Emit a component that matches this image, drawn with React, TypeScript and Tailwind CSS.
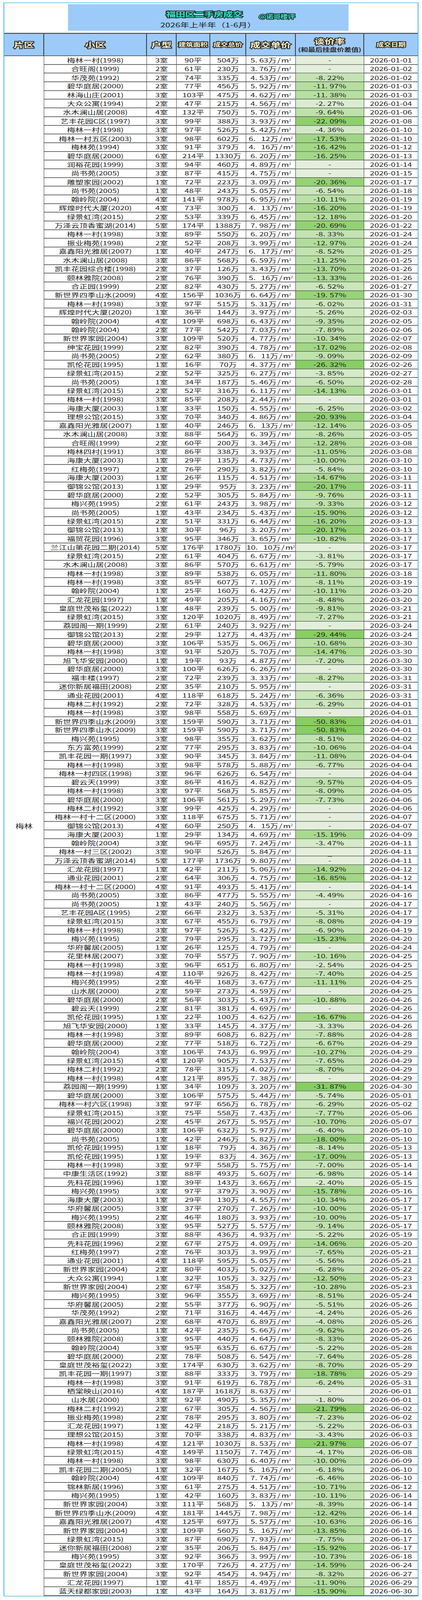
const DATA = `梅林一村(1998)|3|90|504|5.63|-|01-01
合旺阁(1999)|2|61|230|3.76|-|01-02
华茂苑(1992)|2|74|335|4.53|-8.22|01-02
碧华庭居(2000)|2|77|456|5.92|-11.97|01-03
林海山庄(2001)|3|103|475|4.62|-11.38|01-03
大众公寓(1994)|2|47|215|4.56|-2.27|01-04
水木澜山居(2008)|4|132|750|5.70|-9.64|01-06
艺丰花园C区(1997)|3|99|388|3.93|-22.09|01-08
梅林一村(1998)|3|97|526|5.42|-4.36|01-10
梅林一村五区(2003)|3|98|602|6. 12|-17.53|01-10
梅林苑(1994)|3|91|379|4. 16|-16.42|01-12
碧华庭居(2000)|6|214|1330|6.20|-16.25|01-13
润裕花园(1999)|3|94|460|4.89|-|01-14
尚书苑(2005)|3|87|415|4.75|-|01-15
雕塑家园(2002)|1|72|223|3.09|-20.36|01-17
尚书苑(2005)|1|48|243|5.05|-6.54|01-18
翰岭院(2004)|4|141|978|6.95|-10.11|01-19
辉煌时代大厦(2020)|4|73|300|4. 13|-16.20|01-19
绿景虹湾(2015)|2|53|339|6.45|-12.18|01-20
万泽云顶香蜜湖(2014)|5|174|1388|7.98|-20.69|01-22
梅林一村(1998)|3|89|550|6.20|-8.33|01-24
振业梅苑(1998)|2|52|208|3.99|-12.97|01-24
嘉鑫阳光雅居(2007)|1|40|247|6. 17|-8.52|01-25
水木澜山居(2008)|3|86|568|6.59|-11.25|01-25
凯丰花园综合楼(1998)|2|37|126|3.43|-13.70|01-26
颐林雅院(2008)|2|76|390|5. 16|-13.33|01-26
合正园(1999)|2|82|430|5.27|-6.52|01-27
新世界四季山水(2009)|4|156|1036|6.64|-19.57|01-30
梅林一村(1998)|3|97|515|5.31|-6.02|01-31
辉煌时代大厦(2020)|1|36|144|3.97|-5.26|02-03
翰岭院(2004)|4|109|698|6.43|-9.35|02-05
翰岭院(2004)|2|77|542|7.03|-7.89|02-06
新世界家园(2004)|3|109|520|4.77|-10.34|02-07
绅宝花园(1999)|2|82|390|4.78|-17.02|02-08
尚书苑(2005)|2|62|380|6. 11|-9.09|02-09
凯伦花园(1995)|1|16|70|4.37|-26.32|02-26
绿景虹湾(2015)|2|52|325|6.27|-3.85|02-27
尚书苑(2005)|1|34|187|5.46|-6.50|02-28
绿景虹湾(2015)|2|52|316|6.11|-14.13|03-01
梅林一村(1998)|3|85|208|2.44|-|03-01
海康大厦(2003)|1|33|150|4.55|-6.25|03-02
理想公馆(2015)|3|70|340|4.86|-20.93|03-04
嘉鑫阳光雅居(2007)|1|40|246|6. 13|-12.14|03-05
水木澜山居(2008)|3|88|564|6.39|-8.26|03-05
合旺阁(1999)|2|60|200|3.34|-12.28|03-08
梅林四村(1991)|3|86|338|3.93|-11.05|03-08
海康大厦(2003)|1|29|135|4.73|-10.00|03-10
红梅苑(1997)|2|76|290|3.82|-5.84|03-10
海康大厦(2003)|1|26|115|4.51|-14.67|03-11
御锦公馆(2013)|1|29|95|3.23|-20.17|03-11
碧华庭居(2000)|2|52|305|5.84|-9.76|03-11
梅兴苑(1995)|2|61|243|3.98|-9.33|03-12
尚书苑(2005)|1|43|234|5.43|-15.90|03-12
绿景虹湾(2015)|2|51|331|6.44|-16.20|03-13
御锦公馆(2013)|1|30|96|3.20|-20.17|03-13
福贸花园(1996)|3|95|346|3.65|-10.82|03-17
兰江山第花园二期(2014)|5|176|1780|10. 10|-|03-17
绿景虹湾(2015)|2|61|404|6.67|-3.81|03-17
水木澜山居(2008)|3|86|570|6.61|-5.79|03-17
梅林一村(1998)|3|89|538|6.05|-11.80|03-18
梅林一村(1998)|3|85|607|7.10|-8.11|03-19
翰岭院(2004)|1|25|160|6.42|-10.11|03-20
汇龙花园(1997)|1|49|205|4.16|-8.48|03-20
皇庭世茂裕玺(2022)|1|48|239|5.00|-9.81|03-21
绿景虹湾(2015)|3|120|1020|8.49|-7.27|03-21
荔园阁一期(1999)|2|61|240|3.92|-|03-24
御锦公馆(2013)|2|29|127|4.43|-29.44|03-24
碧华庭居(2000)|3|106|535|5.06|-10.68|03-30
梅林一村(1998)|3|91|520|5.70|-14.47|03-30
旭飞华安园(2000)|1|19|93|4.87|-7.20|03-30
碧华庭居(2000)|3|100|626|6.26|-|03-30
福丰楼(1997)|2|72|239|3.33|-8.27|03-31
迷你新居福田(2008)|2|35|210|5.95|-|03-31
通业花园(2001)|4|118|618|5.24|-6.36|03-31
梅林二村(1992)|2|72|328|4.53|-6.29|04-01
梅林一村(1998)|3|98|558|5.69|-|04-01
新世界四季山水(2009)|3|159|590|3.71|-50.83|04-01
新世界四季山水(2009)|3|159|590|3.71|-50.83|04-01
梅兴苑(1995)|3|98|355|3.62|-8.51|04-02
东方富苑(1999)|2|77|295|3.83|-10.06|04-04
凯丰花园一期(1997)|3|90|345|3.84|-11.08|04-04
梅林一村(1998)|3|98|578|5.88|-6.77|04-04
梅林一村四区(1998)|3|96|626|6.54|-|04-04
碧云天(1999)|3|86|416|4.82|-9.57|04-05
梅林一村(1998)|3|97|568|5.85|-8.09|04-05
碧华庭居(2000)|3|106|561|5.29|-7.73|04-06
梅林二村(1992)|3|99|425|4.29|-|04-06
梅林一村十二区(2000)|3|118|675|5.71|-|04-07
御锦公馆(2013)|4|60|250|4. 15|-|04-07
海康大厦(2003)|1|29|134|4.69|-15.19|04-09
翰岭院(2004)|3|96|695|7.24|-3.47|04-11
梅林一村三区(2002)|3|90|526|5.84|_|04-11
万泽云顶香蜜湖(2014)|5|177|1736|9.80|-|04-11
汇龙花园(1997)|1|42|211|5.06|-14.92|04-12
通业花园(2001)|2|64|306|4.75|-16.85|04-12
梅林一村十二区(2000)|4|91|493|5.41|-|04-14
尚书苑(2005)|3|86|477|5.55|-4.49|04-16
尚书苑(2005)|1|43|240|5.56|-|04-17
艺丰花园A区(1995)|2|66|232|3.53|-5.31|04-17
绿景虹湾(2015)|3|67|455|6.79|-8.08|04-19
梅林一村(1998)|3|97|526|5.42|-6.90|04-19
梅兴苑(1995)|2|79|295|3.72|-15.23|04-20
华府馨居(2005)|1|26|125|4.79|-|04-24
花里林居(2007)|3|70|557|7.90|-10.16|04-25
梅林一村(1998)|3|96|651|6.80|-2.54|04-25
梅林一村(1998)|4|110|926|8.42|-7.40|04-25
梅兴苑(1995)|2|46|168|3.67|-11.11|04-25
山水居(2000)|2|59|273|4.59|-|04-25
碧华庭居(2000)|2|56|303|5.43|-10.88|04-26
碧云天(1999)|2|81|381|4.69|-|04-26
凯伦花园(1995)|1|22|100|4.62|-16.67|04-26
旭飞华安园(2000)|1|33|145|4.37|-3.33|04-26
梅林一村(1998)|3|89|608|6.82|-7.88|04-28
碧华庭居(2000)|2|77|518|6.72|-6.67|04-29
翰岭院(2004)|3|106|743|6.99|-10.27|04-29
绿景虹湾(2015)|4|120|905|7.53|-7.65|04-29
梅林二村(1992)|2|78|315|4.02|-8.70|04-29
梅林一村(1998)|4|121|895|7.38|-|04-29
荔园阁一期(1999)|1|34|109|3.20|-31.87|04-30
碧华庭居(2000)|3|106|575|5.44|-5.74|05-01
梅林一村六区(1998)|3|97|656|6.78|-6.29|05-02
绿景虹湾(2015)|3|75|558|7.43|-7.77|05-06
福兴花园(2002)|2|45|267|5.95|-10.70|05-07
碧华庭居(2000)|3|106|632|5.97|-6.40|05-10
尚书苑(2005)|1|42|246|5.82|-18.00|05-10
凯伦花园(1995)|1|18|79|4.36|-8.14|05-13
凯伦花园(1995)|1|19|83|4.36|-17.00|05-13
梅林一村(1998)|3|97|558|5.75|-7.00|05-14
中康生活区(1992)|3|88|493|5.60|-6.98|05-14
先科花园(1996)|1|39|143|3.66|-2.40|05-15
梅兴苑(1995)|3|97|379|3.90|-15.78|05-16
海康大厦(2003)|1|29|130|4.55|-10.34|05-17
华府馨居(2005)|3|37|270|7.26|-10.00|05-17
梅兴苑(1995)|2|46|180|3.93|-10.00|05-17
颐林雅院(2008)|3|95|527|5.57|-9.14|05-17
合正园(1999)|3|88|436|4.93|-5.22|05-19
先科花园(1996)|2|67|275|4.09|-14.06|05-20
红梅苑(1997)|2|76|303|3.99|-7.65|05-21
通业花园(2001)|4|118|595|5.05|-5.56|05-21
新世界家园(2004)|2|80|403|5.02|-6.28|05-22
大众公寓(1994)|1|32|105|3.32|-12.50|05-23
新世界家园(2004)|2|67|358|5.32|-10.28|05-23
梅兴苑(1995)|3|96|355|3.69|-8.51|05-24
华府馨居(2005)|2|55|377|6.90|-5.51|05-26
华茂苑(1992)|2|71|316|4.44|-4.24|05-26
嘉鑫阳光雅居(2007)|2|68|470|6.89|-4.08|05-26
尚书苑(2005)|1|42|235|5.66|-9.62|05-26
颐林雅院(2008)|3|95|440|4.64|-8.33|05-26
翰岭院(2004)|3|95|635|6.67|-5.22|05-28
碧华庭居(2000)|2|78|508|6.54|-7.64|05-28
皇庭世茂裕玺(2022)|3|174|630|3.62|-8.70|05-29
凯丰花园一期(1997)|3|88|333|3.79|-18.78|05-29
梅林一村(1998)|3|91|619|6.78|-6.24|05-31
栖棠映山(2016)|4|187|1618|8.63|-|06-01
山水居(2000)|3|92|490|5.35|-1.80|06-01
梅林二村(1992)|2|67|305|4.56|-21.79|06-02
振业梅苑(1998)|2|78|295|3.80|-7.23|06-02
汇龙花园(1997)|1|42|218|5.21|-5.22|06-03
理想公馆(2015)|3|70|338|4.83|-3.43|06-03
梅林一村(1998)|4|121|1030|8.53|-21.97|06-07
绿景虹湾(2015)|4|149|1150|7.74|-4.17|06-08
梅林一村(1998)|3|98|630|6.40|-10.00|06-09
凯丰花园二期(2005)|1|32|167|5. 16|-6.18|06-10
翰岭院(2004)|4|109|840|7.74|-6.46|06-10
锦林新居(1996)|3|61|275|4.51|-10.71|06-12
梅兴苑(1995)|1|42|160|3.83|-10.11|06-14
新世界家园(2004)|3|111|568|5. 13|-8.39|06-14
新世界四季山水(2009)|4|181|1445|7.98|-12.42|06-14
嘉鑫阳光雅居(2007)|4|125|697|5.57|-10.63|06-16
新世界家园(2004)|3|109|560|5. 16|-13.85|06-16
绿景虹湾(2015)|3|87|690|7.93|-7.75|06-17
迷你新居福田(2008)|2|35|206|5.84|-15.92|06-17
梅兴苑(1995)|3|92|366|3.99|-10.73|06-18
皇庭世茂裕玺(2022)|3|170|726|4.27|-14.59|06-24
新世界家园(2004)|3|92|454|4.94|-8.32|06-27
汇龙花园(1997)|1|41|185|4.49|-11.90|06-29
蓝天绿都家园(2003)|1|43|164|3.81|-15.90|06-30`

const rows = DATA.split("\n").map((line) => line.split("|"))

// excel-style colour scale: pale at 0, saturated green from ~22% down
function rateBg(rate: string) {
  const v = rate.length > 1 ? Math.abs(parseFloat(rate)) : 0
  const t = Math.min(v / 22, 1.08)
  const a = [227, 239, 219]
  const b = [142, 208, 108]
  const c = a.map((x, i) => Math.round(x + (b[i] - x) * t))
  return `rgb(${c[0]}, ${c[1]}, ${c[2]})`
}

const outlined = "font-bold [paint-order:stroke_fill] [-webkit-text-stroke:5px_#262626]"

function Decimal({ value, suffix }: { value: string; suffix: React.ReactNode }) {
  const wide = value.includes(" ")
  const [int, dec] = value.replace(" ", "").split(".")
  return (
    <span className="whitespace-nowrap">
      {int}.<span className={wide ? "ml-[14px]" : "ml-[5px]"}>{dec}</span>
      {suffix}
    </span>
  )
}

function DataRow({ r }: { r: string[] }) {
  const [name, room, area, total, price, rate, date] = r
  return (
    <div className="grid h-[31.7px] grid-cols-[263px_76px_86px_92px_127px_175px_137px] border-b-2 border-[#2e2e2e] text-[21px] leading-none text-[#1e1e1e]">
      <div className="flex items-center justify-center border-r border-[#333] whitespace-nowrap">{name}</div>
      <div className="flex items-center justify-center border-r border-[#333]">{room}室</div>
      <div className="flex items-center justify-center border-r border-[#333]">{area}平</div>
      <div className="flex items-center justify-center border-r border-[#333]">{total}万</div>
      <div className="flex items-center justify-center border-r border-[#333]">
        <Decimal
          value={price}
          suffix={
            <>
              万<span className="ml-[2px]">/</span>
              <span className="ml-[2px]">m</span>
              <span className="relative -top-[7px] text-[10px]">2</span>
            </>
          }
        />
      </div>
      <div
        className="flex items-center justify-center border-r border-[#333]"
        style={{ backgroundColor: rateBg(rate) }}
      >
        {rate.length > 1 ? (
          <Decimal value={rate} suffix="%" />
        ) : (
          <span className={rate === "_" ? "translate-y-[6px]" : ""}>{rate}</span>
        )}
      </div>
      <div className="flex items-center justify-center">2026-{date}</div>
    </div>
  )
}

export default function App() {
  return (
    <div className="h-[4096px] w-[1080px] overflow-hidden bg-white">
      <div className="w-[1080px] origin-top scale-y-[0.7028] pl-[9px] pt-[9px] font-['Noto_Sans_CJK_SC','Noto_Sans',sans-serif]">
        <div className="w-[1062px] border-2 border-[#3db8e9]">
          {/* title block */}
          <div className="h-[109px] pl-[163px] pt-[4px]">
            <div className="flex h-[97px] w-[718px] flex-col items-center bg-[#9dcbf9] pt-[20px]">
              <div className="ml-[114px] flex h-[30px] items-end gap-[42px]">
                <span className={`text-[25px] leading-[30px] tracking-tight text-[#34e4cf] ${outlined}`}>福田区二手房成交</span>
                <span className="mb-[-6px] text-[19px] font-bold leading-[24px] tracking-tight text-[#34e4cf] [paint-order:stroke_fill] [-webkit-text-stroke:4px_#262626]">
                  @诺哥楼评
                </span>
              </div>
              <div className="mt-[10px] text-[23px] leading-[30px] text-[#1c1c1c]">2026年上半年（1-6月）</div>
            </div>
          </div>

          {/* header row */}
          <div className="grid h-[84px] grid-cols-[102px_263px_76px_86px_92px_127px_175px_137px] border-t-[3px] border-b-2 border-[#3a3a3a] bg-[#9dcbf9] text-[#fcefc6]">
            <div className="flex items-center justify-center border-r-2 border-[#333]">
              <span className={`text-[26px] ${outlined}`}>片区</span>
            </div>
            <div className="flex items-center justify-center border-r-2 border-[#333]">
              <span className={`text-[26px] ${outlined}`}>小区</span>
            </div>
            <div className="flex items-center justify-center border-r-2 border-[#333]">
              <span className={`text-[26px] ${outlined}`}>户型</span>
            </div>
            <div className="flex items-center justify-center border-r-2 border-[#333]">
              <span className={`text-[19px] tracking-tight ${outlined}`}>建筑面积</span>
            </div>
            <div className="flex items-center justify-center border-r-2 border-[#333]">
              <span className={`text-[19px] tracking-tight ${outlined}`}>成交总价</span>
            </div>
            <div className="flex items-center justify-center border-r-2 border-[#333]">
              <span className={`text-[26px] ${outlined}`}>成交单价</span>
            </div>
            <div className="flex flex-col items-center justify-center border-r-2 border-[#333]">
              <span className={`text-[26px] leading-[32px] ${outlined}`}>谈价率</span>
              <span className="mt-[2px] text-[19px] font-bold leading-[24px] tracking-tight text-[#2a2a2a]">(和最后挂盘价差值)</span>
            </div>
            <div className="flex items-center justify-center">
              <span className={`text-[19px] tracking-tight ${outlined}`}>成交日期</span>
            </div>
          </div>

          {/* body */}
          <div className="flex">
            <div className="flex w-[102px] items-center justify-center border-r border-[#333] text-[22px] text-[#1e1e1e]">
              梅林
            </div>
            <div className="flex flex-1 flex-col">
              {rows.map((r, i) => (
                <DataRow key={i} r={r} />
              ))}
            </div>
          </div>
        </div>
      </div>
    </div>
  )
}
